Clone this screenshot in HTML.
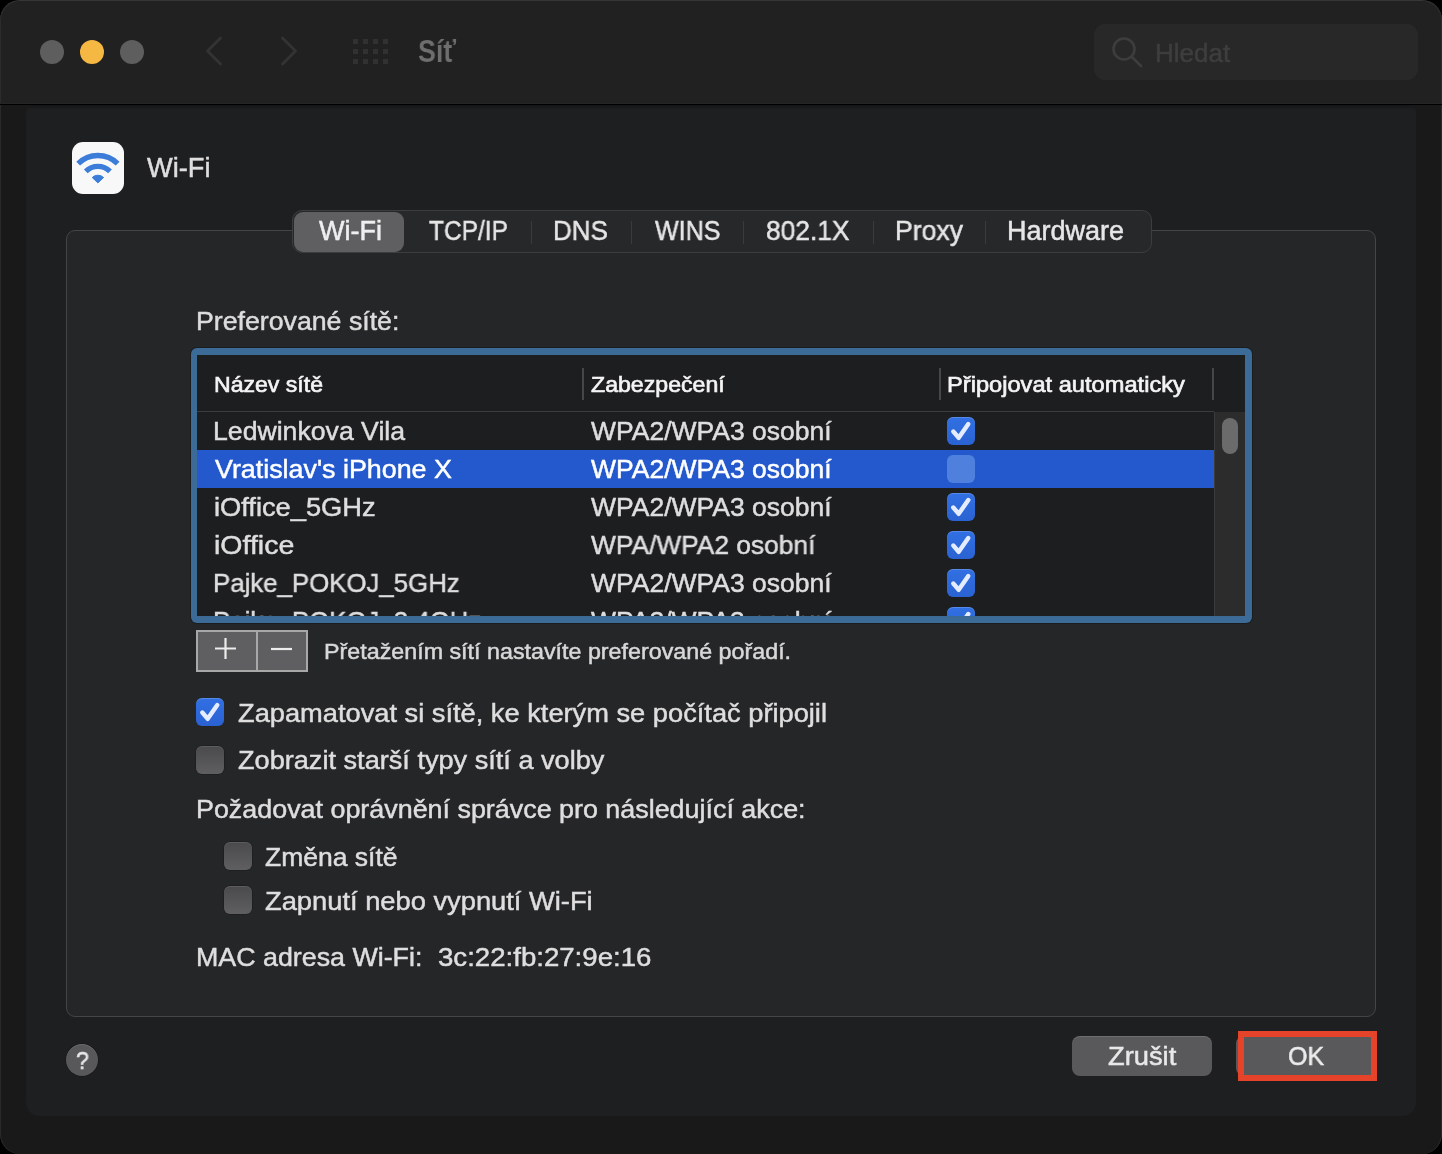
<!DOCTYPE html>
<html><head><meta charset="utf-8"><style>
*{box-sizing:border-box;margin:0;padding:0}
html,body{width:1442px;height:1154px;overflow:hidden;background:#000}
body{position:relative;font-family:'Liberation Sans', sans-serif}
.abs{position:absolute}
.t{position:absolute;line-height:1;white-space:pre;transform-origin:0 0;font-family:'Liberation Sans', sans-serif;-webkit-text-stroke:0.5px currentColor;will-change:transform}
.cb{position:absolute;width:28px;height:28px;border-radius:6px}
.cbon{background:linear-gradient(#3170e3,#2a62d2);box-shadow:inset 0 1px 0 rgba(255,255,255,0.18)}
.cboff{background:linear-gradient(#4a4a4c,#5f5f61);box-shadow:inset 0 1px 0 rgba(255,255,255,0.10),0 0 0 0.5px rgba(0,0,0,0.35)}
.cbsel{background:#4f80dd}
.cb svg{position:absolute;left:0;top:0}
</style></head><body>
<div class="abs" id="win" style="left:0;top:0;width:1442px;height:1154px;border-radius:20px;background:#191919;overflow:hidden;box-shadow:inset 1px 0 0 #2a2a2a, inset -1px 0 0 #2a2a2a">
 <div class="abs" style="left:0;top:0;width:1442px;height:104px;background:#212121;border-top:1px solid #363636;border-radius:20px 20px 0 0;box-shadow:inset 1px 0 0 #2c2c2c, inset -1px 0 0 #2c2c2c"></div>
 <div class="abs" style="left:0;top:103px;width:1442px;height:1px;background:#252525"></div>
 <div class="abs" style="left:0;top:104px;width:1442px;height:1px;background:#000"></div>
</div>
<!-- traffic lights -->
<div class="abs" style="left:40px;top:40px;width:24px;height:24px;border-radius:50%;background:#5e5e5e"></div>
<div class="abs" style="left:80px;top:40px;width:24px;height:24px;border-radius:50%;background:#f5b843"></div>
<div class="abs" style="left:120px;top:40px;width:24px;height:24px;border-radius:50%;background:#5e5e5e"></div>
<svg class="abs" style="left:0;top:0" width="460" height="104">
 <path d="M220.5 38 L207.5 51 L220.5 64" fill="none" stroke="#333333" stroke-width="3" stroke-linecap="round" stroke-linejoin="round"/>
 <path d="M282.5 38 L295.5 51 L282.5 64" fill="none" stroke="#333333" stroke-width="3" stroke-linecap="round" stroke-linejoin="round"/>
 <g fill="#313131">
  <rect x="353" y="39" width="5" height="5"/><rect x="363" y="39" width="5" height="5"/><rect x="373" y="39" width="5" height="5"/><rect x="383" y="39" width="5" height="5"/>
  <rect x="353" y="49" width="5" height="5"/><rect x="363" y="49" width="5" height="5"/><rect x="373" y="49" width="5" height="5"/><rect x="383" y="49" width="5" height="5"/>
  <rect x="353" y="59" width="5" height="5"/><rect x="363" y="59" width="5" height="5"/><rect x="373" y="59" width="5" height="5"/><rect x="383" y="59" width="5" height="5"/>
 </g>
</svg>
<span class="t" style="left:418.14px;top:35.51px;font-size:31px;font-weight:700;color:#6e6e6e;transform:scaleX(0.8636);-webkit-text-stroke:0">Síť</span>
<!-- search -->
<div class="abs" style="left:1094px;top:24px;width:324px;height:56px;border-radius:11px;background:#282828"></div>
<svg class="abs" style="left:1100px;top:28px" width="60" height="50">
 <circle cx="24" cy="21" r="10.5" fill="none" stroke="#3d3d3d" stroke-width="2.6"/>
 <path d="M32 29 L41 38" stroke="#3d3d3d" stroke-width="2.8" stroke-linecap="round"/>
</svg>
<span class="t" style="left:1155.00px;top:39.74px;font-size:26px;font-weight:400;color:#3e3e3e;transform:scaleX(1.0000)">Hledat</span>
<!-- sheet panel -->
<div class="abs" style="left:26px;top:105px;width:1390px;height:1011px;background:linear-gradient(#141516,#1e1f21 5px);border-radius:8px 8px 14px 14px"></div>
<!-- wifi icon -->
<div class="abs" style="left:72px;top:142px;width:52px;height:52px;border-radius:11px;background:#f8f8f9"></div>
<svg class="abs" style="left:72px;top:142px" width="52" height="52" viewBox="0 0 52 52">
 <g fill="none" stroke="#3b7dd8" stroke-width="5.3" stroke-linecap="butt">
  <path d="M6.17 21.67 A27.9 27.9 0 0 1 45.63 21.67"/>
  <path d="M13.81 29.31 A17.1 17.1 0 0 1 37.99 29.31"/>
 </g>
 <path d="M25.9 40.9 L20.2 35.5 A8.2 8.2 0 0 1 31.6 35.5 Z" fill="#3b7dd8" stroke="#3b7dd8" stroke-width="1" stroke-linejoin="round"/>
</svg>
<span class="t" style="left:147.00px;top:155.39px;font-size:27px;font-weight:400;color:#dedede;transform:scaleX(1.0081)">Wi-Fi</span>
<!-- group box -->
<div class="abs" style="left:66px;top:230px;width:1310px;height:787px;border-radius:9px;background:#252628;border:1px solid #444547"></div>
<!-- segmented -->
<div class="abs" style="left:292px;top:210px;width:860px;height:43px;border-radius:10px;background:#27282a;border:1px solid #3c3d3f"></div>
<div class="abs" style="left:294px;top:212px;width:110px;height:40px;border-radius:9px;background:#5f5f62"></div>
<div class="abs" style="left:531px;top:221px;width:1px;height:23px;background:#3a3b3d"></div>
<div class="abs" style="left:631px;top:221px;width:1px;height:23px;background:#3a3b3d"></div>
<div class="abs" style="left:743px;top:221px;width:1px;height:23px;background:#3a3b3d"></div>
<div class="abs" style="left:873px;top:221px;width:1px;height:23px;background:#3a3b3d"></div>
<div class="abs" style="left:985px;top:221px;width:1px;height:23px;background:#3a3b3d"></div>
<span class="t" style="left:319.00px;top:217.89px;font-size:27px;font-weight:400;color:#efefef;transform:scaleX(1.0000)">Wi-Fi</span><span class="t" style="left:429.00px;top:217.89px;font-size:27px;font-weight:400;color:#e6e6e6;transform:scaleX(0.9070)">TCP/IP</span><span class="t" style="left:553.07px;top:217.89px;font-size:27px;font-weight:400;color:#e6e6e6;transform:scaleX(0.9630)">DNS</span><span class="t" style="left:655.00px;top:217.89px;font-size:27px;font-weight:400;color:#e6e6e6;transform:scaleX(0.9286)">WINS</span><span class="t" style="left:766.02px;top:217.89px;font-size:27px;font-weight:400;color:#e6e6e6;transform:scaleX(0.9762)">802.1X</span><span class="t" style="left:895.03px;top:217.89px;font-size:27px;font-weight:400;color:#e6e6e6;transform:scaleX(0.9851)">Proxy</span><span class="t" style="left:1007.00px;top:217.89px;font-size:27px;font-weight:400;color:#e6e6e6;transform:scaleX(1.0000)">Hardware</span>
<span class="t" style="left:195.98px;top:307.82px;font-size:26.5px;font-weight:400;color:#dcdcdc;transform:scaleX(1.0076)">Preferované sítě:</span>
<!-- table -->
<div class="abs" style="left:191px;top:348px;width:1061px;height:275px;border-radius:6px;background:#3d6b98;box-shadow:0 0 0 1px rgba(0,0,0,0.25)"></div>
<div class="abs" style="left:197px;top:355px;width:1048px;height:261px;background:#1d1e20;overflow:hidden">
 <div class="abs" style="left:0;top:56px;width:1017px;height:1px;background:#3b3c3e"></div>
 <div class="abs" style="left:385px;top:13px;width:2px;height:32px;background:#464749"></div>
 <div class="abs" style="left:742px;top:13px;width:2px;height:32px;background:#464749"></div>
 <div class="abs" style="left:1015px;top:13px;width:2px;height:32px;background:#464749"></div>
 <div class="abs" style="left:0;top:95px;width:1017px;height:38px;background:#2359cd"></div>
 <div class="abs" style="left:1017px;top:57px;width:31px;height:204px;background:#2c2c2d;border-left:1px solid #3c3c3d"></div>
 <div class="abs" style="left:1025px;top:63px;width:16px;height:36px;border-radius:8px;background:#6b6b6b"></div>
</div>
<div class="abs" style="left:197px;top:355px;width:1017px;height:261px;overflow:hidden">
 <div class="abs" style="left:-197px;top:-355px;width:1442px;height:1154px">
 <span class="t" style="left:213.95px;top:373.83px;font-size:22px;font-weight:400;color:#f4f4f4;transform:scaleX(1.0490);-webkit-text-stroke:0.65px currentColor">Název sítě</span><span class="t" style="left:591.00px;top:373.83px;font-size:22px;font-weight:400;color:#f4f4f4;transform:scaleX(1.0512);-webkit-text-stroke:0.65px currentColor">Zabezpečení</span><span class="t" style="left:946.93px;top:373.83px;font-size:22px;font-weight:400;color:#f4f4f4;transform:scaleX(1.0747);-webkit-text-stroke:0.65px currentColor">Připojovat automaticky</span>
 <span class="t" style="left:212.99px;top:418.07px;font-size:26.5px;font-weight:400;color:#dedede;transform:scaleX(1.0053)">Ledwinkova Vila</span><span class="t" style="left:591.00px;top:418.07px;font-size:26.5px;font-weight:400;color:#dedede;transform:scaleX(1.0000)">WPA2/WPA3 osobní</span><span class="t" style="left:215.00px;top:456.07px;font-size:26.5px;font-weight:400;color:#ffffff;transform:scaleX(1.0128)">Vratislav's iPhone X</span><span class="t" style="left:591.00px;top:456.07px;font-size:26.5px;font-weight:400;color:#ffffff;transform:scaleX(1.0000)">WPA2/WPA3 osobní</span><span class="t" style="left:213.97px;top:494.07px;font-size:26.5px;font-weight:400;color:#dedede;transform:scaleX(1.0290)">iOffice_5GHz</span><span class="t" style="left:591.00px;top:494.07px;font-size:26.5px;font-weight:400;color:#dedede;transform:scaleX(1.0000)">WPA2/WPA3 osobní</span><span class="t" style="left:213.92px;top:532.07px;font-size:26.5px;font-weight:400;color:#dedede;transform:scaleX(1.0753)">iOffice</span><span class="t" style="left:591.00px;top:532.07px;font-size:26.5px;font-weight:400;color:#dedede;transform:scaleX(0.9934)">WPA/WPA2 osobní</span><span class="t" style="left:213.05px;top:570.07px;font-size:26.5px;font-weight:400;color:#dedede;transform:scaleX(0.9740)">Pajke_POKOJ_5GHz</span><span class="t" style="left:591.00px;top:570.07px;font-size:26.5px;font-weight:400;color:#dedede;transform:scaleX(1.0000)">WPA2/WPA3 osobní</span><span class="t" style="left:213.05px;top:608.07px;font-size:26.5px;font-weight:400;color:#dedede;transform:scaleX(0.9740)">Pajke_POKOJ_2.4GHz</span><span class="t" style="left:591.00px;top:608.07px;font-size:26.5px;font-weight:400;color:#dedede;transform:scaleX(1.0000)">WPA2/WPA3 osobní</span>
 <div class="cb cbon" style="left:947px;top:417px"><svg width="28" height="28" viewBox="0 0 28 28"><path d="M6.3 14.5 L11.7 20.8 L21.3 7.0" fill="none" stroke="#e4edff" stroke-width="4.4" stroke-linecap="round" stroke-linejoin="round"/></svg></div><div class="cb cbsel" style="left:947px;top:455px"></div><div class="cb cbon" style="left:947px;top:493px"><svg width="28" height="28" viewBox="0 0 28 28"><path d="M6.3 14.5 L11.7 20.8 L21.3 7.0" fill="none" stroke="#e4edff" stroke-width="4.4" stroke-linecap="round" stroke-linejoin="round"/></svg></div><div class="cb cbon" style="left:947px;top:531px"><svg width="28" height="28" viewBox="0 0 28 28"><path d="M6.3 14.5 L11.7 20.8 L21.3 7.0" fill="none" stroke="#e4edff" stroke-width="4.4" stroke-linecap="round" stroke-linejoin="round"/></svg></div><div class="cb cbon" style="left:947px;top:569px"><svg width="28" height="28" viewBox="0 0 28 28"><path d="M6.3 14.5 L11.7 20.8 L21.3 7.0" fill="none" stroke="#e4edff" stroke-width="4.4" stroke-linecap="round" stroke-linejoin="round"/></svg></div><div class="cb cbon" style="left:947px;top:607px"><svg width="28" height="28" viewBox="0 0 28 28"><path d="M6.3 14.5 L11.7 20.8 L21.3 7.0" fill="none" stroke="#e4edff" stroke-width="4.4" stroke-linecap="round" stroke-linejoin="round"/></svg></div>
 </div>
</div>
<!-- +/- -->
<div class="abs" style="left:196px;top:630px;width:112px;height:42px;background:#5f5f61;border:2px solid #a8a8a8"></div>
<div class="abs" style="left:256px;top:630px;width:2px;height:42px;background:#a8a8a8"></div>
<svg class="abs" style="left:196px;top:630px" width="112" height="42">
 <path d="M19 18.5 H40 M29.5 8 V29" stroke="#ececec" stroke-width="2.2"/>
 <path d="M75 19 H96" stroke="#ececec" stroke-width="2.2"/>
</svg>
<span class="t" style="left:323.97px;top:640.70px;font-size:22.5px;font-weight:400;color:#d8d8d8;transform:scaleX(1.0345)">Přetažením sítí nastavíte preferované pořadí.</span>
<div class="cb cbon" style="left:196px;top:698px"><svg width="28" height="28" viewBox="0 0 28 28"><path d="M6.3 14.5 L11.7 20.8 L21.3 7.0" fill="none" stroke="#e4edff" stroke-width="4.4" stroke-linecap="round" stroke-linejoin="round"/></svg></div><span class="t" style="left:237.50px;top:699.52px;font-size:26.5px;font-weight:400;color:#dedede;transform:scaleX(1.0280)">Zapamatovat si sítě, ke kterým se počítač připojil</span>
<div class="cb cboff" style="left:196px;top:746px"></div><span class="t" style="left:237.50px;top:747.32px;font-size:26.5px;font-weight:400;color:#dedede;transform:scaleX(1.0237)">Zobrazit starší typy sítí a volby</span>
<span class="t" style="left:195.97px;top:795.92px;font-size:26.5px;font-weight:400;color:#dedede;transform:scaleX(1.0142)">Požadovat oprávnění správce pro následující akce:</span>
<div class="cb cboff" style="left:224px;top:842px"></div><span class="t" style="left:265.00px;top:843.92px;font-size:26.5px;font-weight:400;color:#dedede;transform:scaleX(1.0000)">Změna sítě</span>
<div class="cb cboff" style="left:224px;top:886px"></div><span class="t" style="left:265.00px;top:887.52px;font-size:26.5px;font-weight:400;color:#dedede;transform:scaleX(1.0300)">Zapnutí nebo vypnutí Wi-Fi</span>
<span class="t" style="left:195.98px;top:943.92px;font-size:26.5px;font-weight:400;color:#dedede;transform:scaleX(1.0114)">MAC adresa Wi-Fi:</span><span class="t" style="left:438.46px;top:943.92px;font-size:26.5px;font-weight:400;color:#dedede;transform:scaleX(1.0419)">3c:22:fb:27:9e:16</span>
<!-- bottom -->
<div class="abs" style="left:66px;top:1044px;width:32px;height:32px;border-radius:50%;background:#58585a;box-shadow:inset 0 1px 0 rgba(255,255,255,0.12),0 0 0 0.5px rgba(0,0,0,0.4)"></div>
<span class="t" style="left:75.54px;top:1048.93px;font-size:24px;font-weight:400;color:#e6e6e6;transform:scaleX(0.9583)">?</span>
<div class="abs" style="left:1072px;top:1036px;width:140px;height:40px;border-radius:8px;background:#59595b;box-shadow:inset 0 1px 0 rgba(255,255,255,0.13)"></div>
<span class="t" style="left:1108.00px;top:1042.52px;font-size:26.5px;font-weight:400;color:#e8e8e8;transform:scaleX(1.0299)">Zrušit</span>
<div class="abs" style="left:1236px;top:1036px;width:140px;height:40px;border-radius:8px;background:#59595b;box-shadow:inset 0 1px 0 rgba(255,255,255,0.13)"></div>
<div class="abs" style="left:1238px;top:1031px;width:139px;height:50px;border:6px solid #e5432a"></div>
<span class="t" style="left:1288.05px;top:1042.72px;font-size:26.5px;font-weight:400;color:#ececec;transform:scaleX(0.9459)">OK</span>
</body></html>
